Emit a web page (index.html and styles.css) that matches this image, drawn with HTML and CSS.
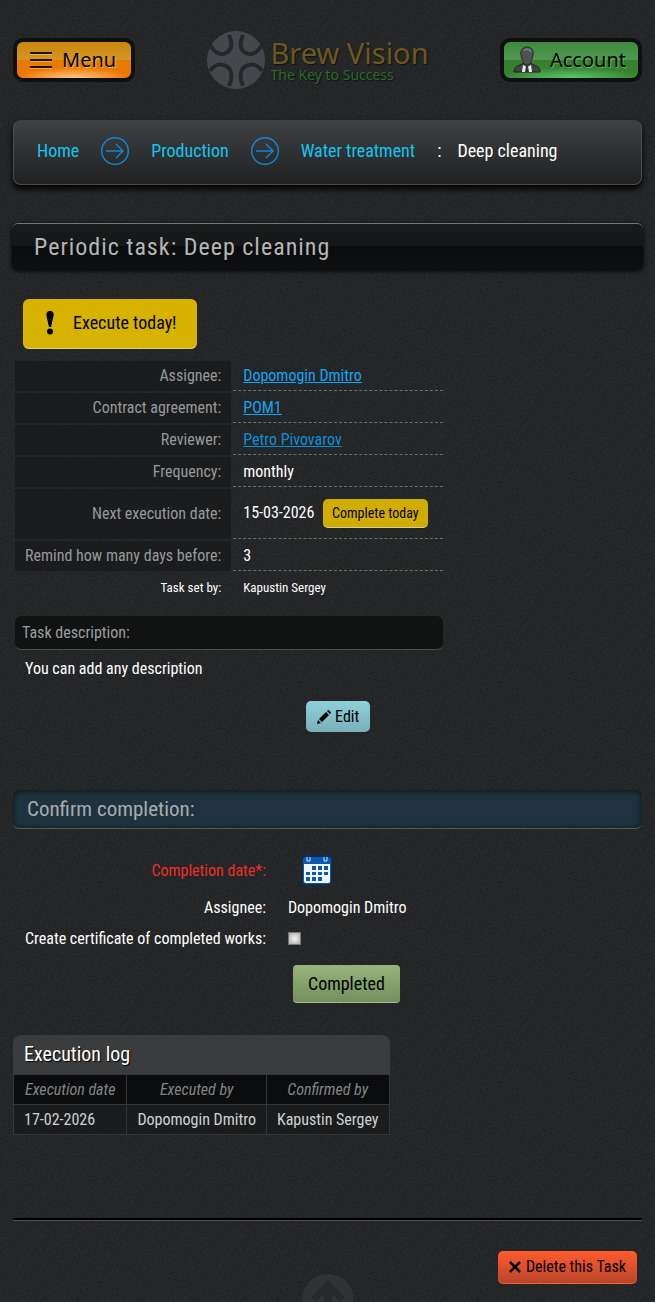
FILE: index.html
```html
<!DOCTYPE html>
<html lang="en">
<head>
    <meta charset="UTF-8">
    <title>Periodic task: Deep cleaning</title>
    <link rel="stylesheet" href="styles.css">
</head>
<body>
    <header class="header">
        <button class="top-btn menu" type="button">
            <svg width="24" height="20" viewBox="0 0 24 20">
                <path d="M1 4h22M1 11h22M1 18h22" stroke="#ffd77a" stroke-width="1"/>
                <path d="M1 3h22M1 10h22M1 17h22" stroke="#1a1408" stroke-width="2"/>
            </svg>
            <span>Menu</span>
        </button>
        <a class="logo" href="#">
            <svg width="58" height="58" viewBox="0 0 58 58">
                <defs><clipPath id="disc"><circle cx="29" cy="29" r="29"/></clipPath></defs>
                <g clip-path="url(#disc)">
                    <rect width="58" height="58" fill="#44484c"/>
                    <g fill="none" stroke="#25282a" stroke-width="4">
                        <path d="M3 14c4 7 10 11 16 8s7-9 3-18"/>
                        <path d="M55 14c-4 7-10 11-16 8s-7-9-3-18"/>
                        <path d="M3 40c4-6 10-8 16-5s7 11 3 20"/>
                        <path d="M55 40c-4-6-10-8-16-5s-7 11-3 20"/>
                    </g>
                </g>
            </svg>
            <span class="logo-text">
                <span class="logo-name">Brew Vision</span>
                <span class="logo-slogan">The Key to Success</span>
            </span>
        </a>
        <button class="top-btn account" type="button">
            <svg width="28" height="28" viewBox="0 0 28 28">
                <path d="M1 26c0-4 2-6 6-7l4-2h6l4 2c4 1 6 3 6 7z" fill="#444" stroke="#222"/>
                <path d="M10 19l4 2 4-2 1 7H9z" fill="#eee"/>
                <path d="M13 20h2l1 6h-4z" fill="#333"/>
                <path d="M14 1c4 0 7 3 6 8-1 6-3 10-6 10s-5-4-6-10c-1-5 2-8 6-8z" fill="#505050" stroke="#2a2a2a"/>
                <path d="M11 5c2-3 6-2 7 1" fill="none" stroke="#777" stroke-width="2"/>
            </svg>
            <span>Account</span>
        </button>
    </header>

    <nav class="crumbs">
        <a href="#">Home</a>
        <svg class="arrow" width="28" height="28" viewBox="0 0 28 28"><circle cx="14" cy="14" r="13.3"/><path d="M5 14h17M15 7l7 7-7 7"/></svg>
        <a href="#">Production</a>
        <svg class="arrow" width="28" height="28" viewBox="0 0 28 28"><circle cx="14" cy="14" r="13.3"/><path d="M5 14h17M15 7l7 7-7 7"/></svg>
        <a href="#">Water treatment</a>
        <span class="current"><span>:</span><span>Deep cleaning</span></span>
    </nav>

    <h1 class="title">Periodic task: Deep cleaning</h1>

    <main class="content">
        <div class="alert">
            <svg width="8" height="24" viewBox="0 0 8 24"><path d="M4 0c3 0 4 2 3.500 5L5 16H3L.5 5C0 2 1 0 4 0z"/><circle cx="4" cy="20.500" r="3"/></svg>
            <span>Execute today!</span>
        </div>

        <div class="task">
            <table class="info">
                <tr><th>Assignee:</th><td><a href="#">Dopomogin Dmitro</a></td></tr>
                <tr><th>Contract agreement:</th><td><a href="#">POM1</a></td></tr>
                <tr><th>Reviewer:</th><td><a class="dim" href="#">Petro Pivovarov</a></td></tr>
                <tr><th>Frequency:</th><td>monthly</td></tr>
                <tr class="next"><th>Next execution date:</th><td>15-03-2026 <button class="btn today" type="button">Complete today</button></td></tr>
                <tr><th>Remind how many days before:</th><td>3</td></tr>
                <tr class="author"><th>Task set by:</th><td>Kapustin Sergey</td></tr>
            </table>
            <h2 class="desc-title">Task description:</h2>
            <p class="desc">You can add any description</p>
            <button class="btn edit" type="button">
                <svg width="14" height="14" viewBox="0 0 14 14"><path d="M0 14l1-4 3 3zM2 9l7-7 3 3-7 7zM10 1l1-1c1 0 3 2 3 3l-1 1z"/></svg>
                Edit
            </button>
        </div>

        <h2 class="confirm-title">Confirm completion:</h2>
        <form class="confirm">
            <label class="required" for="pick">Completion date*:</label>
            <button class="pick" id="pick" type="button" aria-label="Completion date">
                <svg width="30" height="30" viewBox="0 0 30 30">
                    <rect width="30" height="30" rx="4" fill="#082f5c"/>
                    <rect x="1" y="2" width="28" height="27" rx="3" fill="#0b59aa"/>
                    <path d="M2 9h26v17q0 2-2 2H4q-2 0-2-2z" fill="#f2f4f7"/>
                    <path d="M5 2v4h3V2M22 2v4h3V2" fill="none" stroke="#cfe2f5"/>
                    <path d="M10 11h4v4h-4zM16 11h4v4h-4zM22 11h4v4h-4zM4 17h4v3H4zM10 17h4v3h-4zM16 17h4v3h-4zM22 17h4v3h-4zM4 22h4v4H4zM10 22h4v4h-4zM16 22h4v4h-4z" fill="#0b59aa"/>
                </svg>
            </button>
            <span class="name">Assignee:</span>
            <span>Dopomogin Dmitro</span>
            <label for="cert">Create certificate of completed works:</label>
            <input class="check" id="cert" type="checkbox">
            <button class="btn done" type="submit">Completed</button>
        </form>

        <table class="log">
            <caption>Execution log</caption>
            <tr><th>Execution date</th><th>Executed by</th><th>Confirmed by</th></tr>
            <tr><td>17-02-2026</td><td>Dopomogin Dmitro</td><td>Kapustin Sergey</td></tr>
        </table>
    </main>

    <footer class="footer">
        <button class="btn delete" type="button">
            <svg width="12" height="12" viewBox="0 0 12 12"><path d="M1 1l10 10M11 1L1 11" stroke="#000" stroke-width="2.500"/></svg>
            Delete this Task
        </button>
    </footer>

    <a class="to-top" href="#" aria-label="Up">
        <svg width="52" height="52" viewBox="0 0 52 52"><circle cx="26" cy="26" r="26" fill="#303336"/><path d="M22 44V20l-8 8-5-5L26 6l17 17-5 5-8-8v24z" fill="#26292b"/></svg>
    </a>
</body>
</html>
```
FILE: styles.css
```css
*{box-sizing: border-box;}
html{background: #28292b;}
body{
    margin: 0;
    padding: 31px 13px 18px;
    color: #fff;
    font: 16px/20px "Roboto Condensed", "Liberation Sans Narrow", Roboto, sans-serif;
    background: #28292b url("data:image/svg+xml,%3Csvg xmlns='http://www.w3.org/2000/svg' width='200' height='200'%3E%3Cfilter id='n'%3E%3CfeTurbulence type='fractalNoise' baseFrequency='.5' numOctaves='2' stitchTiles='stitch'/%3E%3CfeColorMatrix values='0 0 0 0 0 0 0 0 0 0 0 0 0 0 0 .5 0 0 0 -.18'/%3E%3C/filter%3E%3Crect width='200' height='200' filter='url(%23n)'/%3E%3C/svg%3E");
}
button{font: inherit;cursor: pointer;}
h1,h2,p{margin: 0;font-weight: 400;}

/* header */
.header{display: flex;justify-content: space-between;align-items: center;height: 58px;}
.top-btn{display: flex;align-items: center;gap: 9px;height: 44px;padding: 0 15px 0 12px;border: 4px solid #0e1011;border-radius: 10px;color: #000;font: 20px/24px "Noto Sans", sans-serif;}
.menu{background: radial-gradient(ellipse 50% 30% at 50% 100%, #ffc78c 0, transparent), linear-gradient(#c8860c, #d79524 50%, #e67d00 50%, #ee7400);text-shadow: 1px 1px 1px #f5bb62;}
.account{padding: 0 12px 0 9px;background: radial-gradient(ellipse 50% 30% at 50% 100%, #58c96c 0, transparent), linear-gradient(#3d8a3d, #4f9950 50%, #35802d 50%, #398432);text-shadow: 1px 1px 1px #67b567;}
.logo{display: flex;align-items: center;gap: 6px;text-decoration: none;font-family: "Noto Sans", sans-serif;text-shadow: 1px 1px 1px #111;}
.logo-text{display: flex;flex-direction: column;}
.logo-name{color: #6c5823;font-size: 29px;line-height: 30px;}
.logo-slogan{color: #286c2a;font-size: 14px;line-height: 14px;}

/* breadcrumbs */
.crumbs{display: flex;flex-wrap: wrap;align-items: center;gap: 22px;min-height: 65px;margin-top: 31px;padding: 0 23px 3px;font-size: 18px;border: 1px solid #4a4c4e;border-top-color: #3d3f41;border-radius: 8px;background: linear-gradient(#3e4042, #1f2123);box-shadow: 0 4px 6px #000;}
.crumbs a{color: #11c8f3;text-decoration: none;}
.arrow{fill: none;stroke: #1287d8;stroke-width: 1.400;}
.current{display: flex;gap: 16px;}

.title{margin: 38px -1px 0;padding: 0 22px;font-size: 24px;line-height: 46px;letter-spacing: 1px;color: #b4b6b8;border-top: 1px solid #747677;border-radius: 6px;background: linear-gradient(#181b1b, #151818 48%, #0b0c0e 48%, #0e0f10);box-shadow: 0 1px 4px #000;}

/* task */
.alert{display: flex;align-items: center;gap: 19px;width: fit-content;height: 50px;margin: 29px 10px 10px;padding: 0 20px 2px 23px;font-size: 18px;color: #000;background: #d7b300;border-bottom: 1px solid #d9cf90;border-radius: 6px;}
.task{display: flex;flex-direction: column;width: fit-content;}
.info{border-spacing: 2px;}
.info th,.info td{height: 30px;padding: 0 10px;}
.info th{font-weight: 400;text-align: right;color: #97999b;background: #1a1c1d;}
.info td{width: 210px;border-bottom: 1px dashed #6c6c68;}
.info a{color: #12a5f4;}
.info a.dim{color: #0d8fd8;}
.info .next th,.info .next td{height: 50px;}
.info .author th,.info .author td{font-size: 13px;color: #fff;background: none;border: 0;}
.btn{border: 0;border-radius: 5px;color: #000;}
.today{height: 29px;margin-left: 5px;padding: 0 9px;font-size: 14px;background: #d0ad00;border-bottom: 1px solid #d9cf90;}
.desc-title{margin: 11px 2px 0;padding: 0 7px;font-size: 16px;line-height: 33px;color: #9b9da0;background: #111313;border-bottom: 1px solid #4a4c4e;border-radius: 6px;}
.desc{padding: 9px 12px 0;}
.edit{display: flex;align-items: center;gap: 4px;align-self: flex-end;height: 31px;margin: 22px 75px 0 0;padding: 0 11px;background: linear-gradient(#8fd0da, #79b0b9);}

/* confirm form */
.confirm-title{margin-top: 58px;padding: 0 14px;font-size: 21px;line-height: 38px;color: #a9abad;background: #1e333f;border-bottom: 1px solid #52585c;border-radius: 6px;box-shadow: inset 0 1px 6px #0b1318;}
.confirm{display: grid;grid-template-columns: auto 1fr;column-gap: 22px;align-items: center;width: fit-content;margin-top: 26px;padding-left: 12px;justify-items: start;}
.confirm label,.name{justify-self: end;line-height: 31px;}
.confirm .required{align-self: start;color: #ec2f26;}
.pick{height: 37px;margin-left: 14px;padding: 0 0 7px;border: 0;background: none;}
.pick svg{display: block;}
.check{appearance: none;width: 13px;height: 13px;margin: 0;border: 1px solid #777;background: radial-gradient(#f4f4f4, #aaa);}
.done{grid-column: 2;height: 38px;margin: 11px 0 0 5px;padding: 0 15px;font-size: 18px;background: linear-gradient(#95b57a, #758f5f);border-bottom: 1px solid #a3bd8c;border-radius: 4px;}

/* log */
.log{margin-top: 32px;border-collapse: collapse;}
.log caption{padding: 0 11px;font-size: 20px;line-height: 39px;text-align: left;background: #3a3c3e;border-radius: 8px 8px 0 0;text-shadow: 1px 1px 1px #000;}
.log th,.log td{height: 30px;padding: 0 10px;border: 1px solid #343638;}
.log th{padding: 0 11px;font-weight: 400;font-style: italic;color: #838587;background: #0b0c0d;}
.log td{color: #d0d2d4;background: #1a1c1e;}

.footer{display: flex;justify-content: flex-end;margin-top: 83px;padding: 31px 5px 0;border-top: 2px solid #000;box-shadow: inset 0 1px 0 #505254;}
.delete{display: flex;align-items: center;gap: 5px;height: 33px;padding: 0 11px;background: linear-gradient(#ff5b2e, #b9452b);border-bottom: 1px solid #f0603a;}
.to-top{position: fixed;left: calc(50% - 26px);bottom: -24px;height: 52px;}
```
